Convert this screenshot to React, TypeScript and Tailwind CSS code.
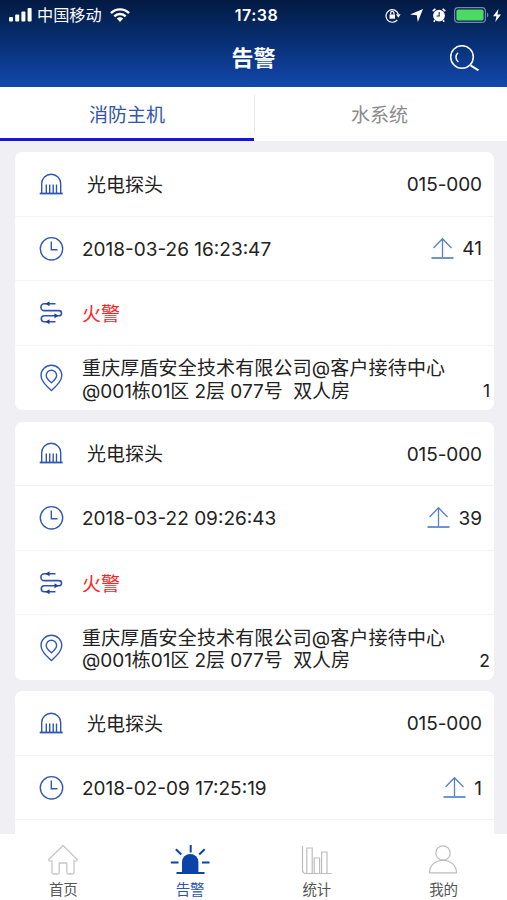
import React from 'react';

interface Alarm {
  id: number;
  device: string;
  code: string;
  time: string;
  count: number;
  type?: string;
  address?: string[];
}

const alarms: Alarm[] = [
  {
    id: 1,
    device: '光电探头',
    code: '015-000',
    time: '2018-03-26 16:23:47',
    count: 41,
    type: '火警',
    address: ['重庆厚盾安全技术有限公司@客户接待中心', '@001栋01区 2层 077号  双人房'],
  },
  {
    id: 2,
    device: '光电探头',
    code: '015-000',
    time: '2018-03-22 09:26:43',
    count: 39,
    type: '火警',
    address: ['重庆厚盾安全技术有限公司@客户接待中心', '@001栋01区 2层 077号  双人房'],
  },
  {
    id: 3,
    device: '光电探头',
    code: '015-000',
    time: '2018-02-09 17:25:19',
    count: 1,
  },
];

/* Row icons */

const DetectorIcon = () => (
  <svg width="25" height="24" viewBox="0 0 25 24" fill="none" stroke="#2f56b3" strokeWidth="1.4">
    <path d="M2.700 21V11.500a9.500 9.300 0 0 1 19 0V21" />
    <path d="M7.300 21v-8.500M10.700 21v-8.500M14.200 21v-8.500M17.500 21v-8.500" />
    <path d="M.7 21.500h23" strokeWidth="1.800" />
  </svg>
);

const ClockIcon = () => (
  <svg width="25" height="25" viewBox="0 0 25 25" fill="none" stroke="#3159b5" strokeWidth="1.400">
    <circle cx="12.500" cy="12.800" r="11.200" />
    <path d="M12.300 5.500v8.200h6.200" />
  </svg>
);

const RouteIcon = () => (
  <svg width="25" height="25" viewBox="0 0 25 25" fill="none" stroke="#2c54b0" strokeWidth="1.600">
    <path d="M16.500 3.800H5.300a3.400 3.400 0 0 0 0 6.800h14.600a2.600 2.600 0 0 1 0 5.200H5.300a3 3 0 0 0 0 6h11.200" />
    <path d="M10.500 1.300v5L6.300 3.800zM15.500 13.300v5l4.200-2.500zM10.500 19.300v5l-4.200-2.500z" fill="#1d3f98" stroke="none" />
  </svg>
);

const PinIcon = () => (
  <svg width="25" height="28" viewBox="0 0 25 28" fill="none" stroke="#3159b5" strokeWidth="1.400">
    <path d="M12.400 26.600C7 21.500 2 17 2 11.400a10.400 10.200 0 0 1 20.800 0C22.800 17 17.800 21.500 12.400 26.600z" />
    <path d="M12.400 18.800c-2.800-2.300-5.200-4.600-5.200-7.300a5.200 5.300 0 0 1 10.400 0c0 2.700-2.400 5-5.200 7.300z" />
  </svg>
);

const UploadIcon = () => (
  <svg width="23" height="23" viewBox="0 0 23 23" fill="none" stroke="#5580c8" strokeWidth="1.300">
    <path d="M11.500 20V2M2.500 11L11.500 1.800 20.500 11" />
    <path d="M.5 21h22" strokeWidth="1.700" />
  </svg>
);

/* Status bar */

const StatusBar = () => (
  <div className="flex h-[30px] items-center text-white">
    <div className="flex flex-1 items-center pl-[9px]">
      <svg width="23" height="14" viewBox="0 0 23 14" fill="#fff">
        <rect x="0" y="9" width="4" height="4.500" rx="1" />
        <rect x="6.200" y="6.500" width="4" height="7" rx="1" />
        <rect x="12.400" y="3.500" width="4" height="10" rx="1" />
        <rect x="18.600" y="0" width="4" height="13.500" rx="1" />
      </svg>
      <span className="ml-[5px] text-[16.200px] leading-none">中国移动</span>
      <svg className="ml-[8px]" width="20" height="14" viewBox="0 0 20 14" fill="none" stroke="#fff" strokeWidth="2.400">
        <path d="M1 5.200a12.600 12.600 0 0 1 18 0" />
        <path d="M4.300 8.400a8 8 0 0 1 11.400 0" />
        <path d="M6.800 10.600a4.600 4.600 0 0 1 6.400 0L10 14z" fill="#fff" stroke="none" />
      </svg>
    </div>
    <span className="ml-[3px] text-[16px] font-semibold leading-none tracking-[0.500px]">17:38</span>
    <div className="flex flex-1 items-center justify-end pr-[6px]">
      <svg width="16" height="15" viewBox="0 0 16 15" fill="none" stroke="#fff" strokeWidth="1.200">
        <path d="M12.300 11.800A6.300 6.300 0 1 1 13.300 6" />
        <path d="M11 6.200h4.600l-2.200 3.500z" fill="#fff" stroke="none" />
        <rect x="4.500" y="6.500" width="5.500" height="4.200" fill="#fff" stroke="none" />
        <path d="M5.700 6.500V5a1.600 1.600 0 0 1 3.200 0v1.500" />
      </svg>
      <svg className="ml-[9px]" width="13" height="13" viewBox="0 0 13 13" fill="#fff">
        <path d="M13 0L7.800 13 6.800 6.300 0 5.500z" />
      </svg>
      <svg className="ml-[9px]" width="14" height="14" viewBox="0 0 14 14">
        <circle cx="7" cy="7.600" r="5.900" fill="#fff" />
        <path d="M.7 3.200L3.400.8M13.300 3.200L10.600.8M3 12.200l-1.200 1.500M11 12.200l1.200 1.500" stroke="#fff" strokeWidth="1.700" />
        <path d="M7.200 4v4H4.600" fill="none" stroke="#0a2a68" strokeWidth="1.100" />
      </svg>
      <svg className="ml-[8px]" width="35" height="16" viewBox="0 0 35 16">
        <rect x=".6" y=".6" width="30.800" height="14.800" rx="3.500" fill="none" stroke="#7787a8" strokeWidth="1.200" />
        <rect x="2.400" y="2.400" width="27.200" height="11.200" rx="1.800" fill="#4cd964" />
        <path d="M33 5.500c1.800.8 1.800 4.200 0 5z" fill="#7787a8" />
      </svg>
      <svg className="ml-[4px]" width="8" height="13" viewBox="0 0 8 13" fill="#fff">
        <path d="M5.500 0L0 7.300h3.400L2.300 13 8 5.400H4.500z" />
      </svg>
    </div>
  </div>
);

const Row: React.FC<{ icon: React.ReactNode; children: React.ReactNode; last?: boolean }> = ({ icon, children, last }) => (
  <div className={`flex h-[64.600px] items-center pl-6 pr-3 ${last ? '' : 'border-b border-[#f3f3f6]'}`}>
    <div className="mr-[18px] flex w-[25px] justify-center">{icon}</div>
    {children}
  </div>
);

const AlarmCard: React.FC<{ alarm: Alarm }> = ({ alarm }) => (
  <div className="relative min-h-[258px] shrink-0 rounded-[7px] bg-white">
    <Row icon={<DetectorIcon />}>
      <span className="ml-[5px] flex-1 pt-[4px]">{alarm.device}</span>
      <span className="pt-[3px] tracking-[-0.100px]">{alarm.code}</span>
    </Row>
    <Row icon={<ClockIcon />}>
      <span className="flex-1 pt-[3px]">{alarm.time}</span>
      <UploadIcon />
      <span className="ml-[8px] pt-[2px]">{alarm.count}</span>
    </Row>
    {alarm.type && (
      <Row icon={<RouteIcon />}>
        <span className="pt-[4px] text-[#ff2424]">{alarm.type}</span>
      </Row>
    )}
    {alarm.address && (
      <>
        <Row icon={<PinIcon />} last>
          <div className="whitespace-pre pt-[5px] leading-[22.500px]">
            <p className="tracking-[0.150px]">{alarm.address[0]}</p>
            <p className="tracking-[-0.060px]">{alarm.address[1]}</p>
          </div>
        </Row>
        <span className="absolute bottom-[7px] right-[4px] text-[17.500px] leading-6">{alarm.id}</span>
      </>
    )}
  </div>
);

/* Bottom navigation */

const navItems = [
  {
    label: '首页',
    active: false,
    icon: (
      <svg width="40" height="32" viewBox="0 0 40 32" fill="none" stroke="#c6c6c6" strokeWidth="1.300" strokeLinejoin="round">
        <path d="M20 1.500L5.800 15.500c-.5 1.200.3 1.700 3.200 1.500v11.500c0 1 .5 1.500 1.500 1.500h4.300c1 0 1.400-.5 1.400-1.500V19h7.600v9.500c0 1 .4 1.500 1.400 1.500h4.300c1 0 1.500-.5 1.500-1.500V17c2.900.2 3.700-.3 3.200-1.500z" />
      </svg>
    ),
  },
  {
    label: '告警',
    active: true,
    icon: (
      <svg width="40" height="32" viewBox="0 0 40 32" fill="none" stroke="#0c43a8" strokeWidth="2">
        <path d="M12 29V18a8.200 8 0 0 1 16.400 0v11z" fill="#0c43a8" stroke="none" />
        <path d="M6.500 29h28M20.700 1v7.500M5.800 5.200l5.500 5.300M34.700 5.200L29.200 10.500M.8 18.500h7.700M32 18.500h7.500" />
      </svg>
    ),
  },
  {
    label: '统计',
    active: false,
    icon: (
      <svg width="40" height="32" viewBox="0 0 40 32" fill="none" stroke="#bdbdbd" strokeWidth="1.200">
        <path d="M5.500 2v23.500c0 2.700 1 4 3.500 4h25.500" />
        <path d="M9.800 29.500V4h5.400v25.500M17.200 29.500V14h5.400v15.500M24.600 29.500V8h5.400v21.500" />
      </svg>
    ),
  },
  {
    label: '我的',
    active: false,
    icon: (
      <svg width="40" height="32" viewBox="0 0 40 32" fill="none" stroke="#bdbdbd" strokeWidth="1.200">
        <circle cx="19" cy="9" r="7.200" />
        <path d="M5.500 28.800c0-7 5.500-12.500 13.500-12.500s13.500 5.500 13.500 12.500z" />
      </svg>
    ),
  },
];

export default function App() {
  return (
    <div className="flex h-[900px] w-[507px] flex-col overflow-hidden bg-[#efeff4] font-[Inter,'Noto_Sans_CJK_SC',sans-serif] text-[19px] leading-[28px] text-[#222]">
      <header className="h-[87px] shrink-0 bg-linear-to-b from-[#031a43] to-[#1248ad]">
        <StatusBar />
        <div className="flex h-[56px] items-center">
          <div className="flex-1" />
          <h1 className="text-[22px] font-bold text-white">告警</h1>
          <div className="flex flex-1 basis-0 justify-end">
            <svg className="mr-[27px]" width="31" height="26" viewBox="0 0 31 26" fill="none" stroke="#fff" strokeWidth="1.500">
              <circle cx="13" cy="12" r="11.300" />
              <path d="M21.500 20.300l8 5" strokeWidth="2" />
              <path d="M9 7.800c-3 2.800-2.600 6.800.4 9.200" />
            </svg>
          </div>
        </div>
      </header>

      <div className="flex h-[54px] shrink-0 bg-white">
        <div className="flex w-[254px] items-center justify-center border-b-[3px] border-[#1a16d8] pt-[6px] text-[#3156ab]">
          消防主机
        </div>
        <div className="my-2 w-px bg-[#e8e8eb]" />
        <div className="flex flex-1 items-center justify-center pr-[3px] pt-[3px] text-[#8b8b8b]">水系统</div>
      </div>

      <main className="flex min-h-0 flex-1 flex-col gap-[11.200px] overflow-hidden pl-[15px] pr-[13px] pt-[11px]">
        {alarms.map((alarm) => (
          <AlarmCard key={alarm.id} alarm={alarm} />
        ))}
      </main>

      <nav className="flex h-[66px] shrink-0 bg-white">
        {navItems.map((item) => (
          <div key={item.label} className="flex flex-1 flex-col items-center pt-[10px]">
            {item.icon}
            <span className={`mt-[4px] text-[14.500px] leading-[20px] ${item.active ? 'text-[#2c55ae]' : 'text-[#555]'}`}>
              {item.label}
            </span>
          </div>
        ))}
      </nav>
    </div>
  );
}
